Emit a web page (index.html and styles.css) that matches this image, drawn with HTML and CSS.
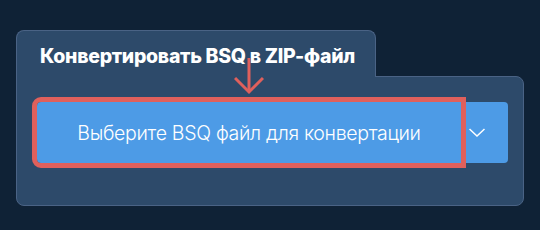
FILE: index.html
```html
<!DOCTYPE html>
<html lang="ru">

<head>
    <meta charset="UTF-8">
    <meta name="viewport" content="width=device-width, initial-scale=1.0">
    <title>BSQ в ZIP</title>
    <link rel="stylesheet" href="styles.css">
</head>

<body>

    <div class="card">
        <!-- Tab header -->
        <div class="tab">
            <h2>Конвертировать BSQ в ZIP-файл</h2>
        </div>

        <!-- Panel with file picker -->
        <div class="panel">
            <div class="picker">
                <button class="picker-main" type="button">Выберите BSQ файл для конвертации</button>
                <button class="picker-more" type="button" aria-label="Ещё">
                    <svg width="16" height="9" viewBox="0 0 16 9">
                        <polyline points="0.5,1 8,8 15.5,1" fill="none" stroke="#fff" stroke-width="1.5" />
                    </svg>
                </button>
            </div>
        </div>

        <!-- Annotation arrow -->
        <svg class="arrow" width="30" height="38" viewBox="0 0 30 38">
            <line x1="15" y1="0" x2="15" y2="34" stroke="#e0605c" stroke-width="3" />
            <polyline points="1,20 15,34 29,20" fill="none" stroke="#e0605c" stroke-width="3" />
        </svg>
    </div>

</body>

</html>
```

FILE: styles.css
```css
/* Reset */
* {
    margin: 0;
    padding: 0;
    box-sizing: border-box;
    font-family: 'Inter', 'Noto Sans', sans-serif;
}

body {
    background: #0f2236;
    padding: 30px 0 0 16px;
    height: 100vh;
    overflow: hidden;
}

.card {
    position: relative;
    width: 508px;
}

/* Tab on top of the panel */
.tab {
    position: relative;
    z-index: 1;
    width: 360px;
    height: 47px;
    margin-bottom: -1px;
    background: #2d4a6a;
    border: 1px solid #4a6385;
    border-bottom: none;
    border-radius: 8px 8px 0 0;
    padding: 13px 0 0 23px;
}

.tab h2 {
    color: #fff;
    font-size: 19.5px;
    font-weight: 800;
    line-height: 24px;
    letter-spacing: -0.3px;
}

.panel {
    height: 130px;
    background: #2d4a6a;
    border: 1px solid #4a6385;
    border-radius: 0 8px 8px 8px;
    padding: 25px 15px 0 20px;
}

/* File picker button */
.picker {
    display: flex;
    height: 61px;
    background: #4d9be6;
    border-radius: 4px;
}

.picker-main {
    width: 424px;
    background: transparent;
    border: none;
    border-radius: 4px 0 0 4px;
    outline: 5px solid #e0605c; /* annotation box */
    color: #fff;
    font-size: 19.5px;
    font-weight: 300;
    letter-spacing: -0.3px;
    cursor: pointer;
}

.picker-more {
    flex: 1;
    background: transparent;
    border: none;
    display: flex;
    align-items: center;
    padding-left: 8px;
    cursor: pointer;
}

.arrow {
    position: absolute;
    left: 218px;
    top: 28px;
    z-index: 2;
}
```
